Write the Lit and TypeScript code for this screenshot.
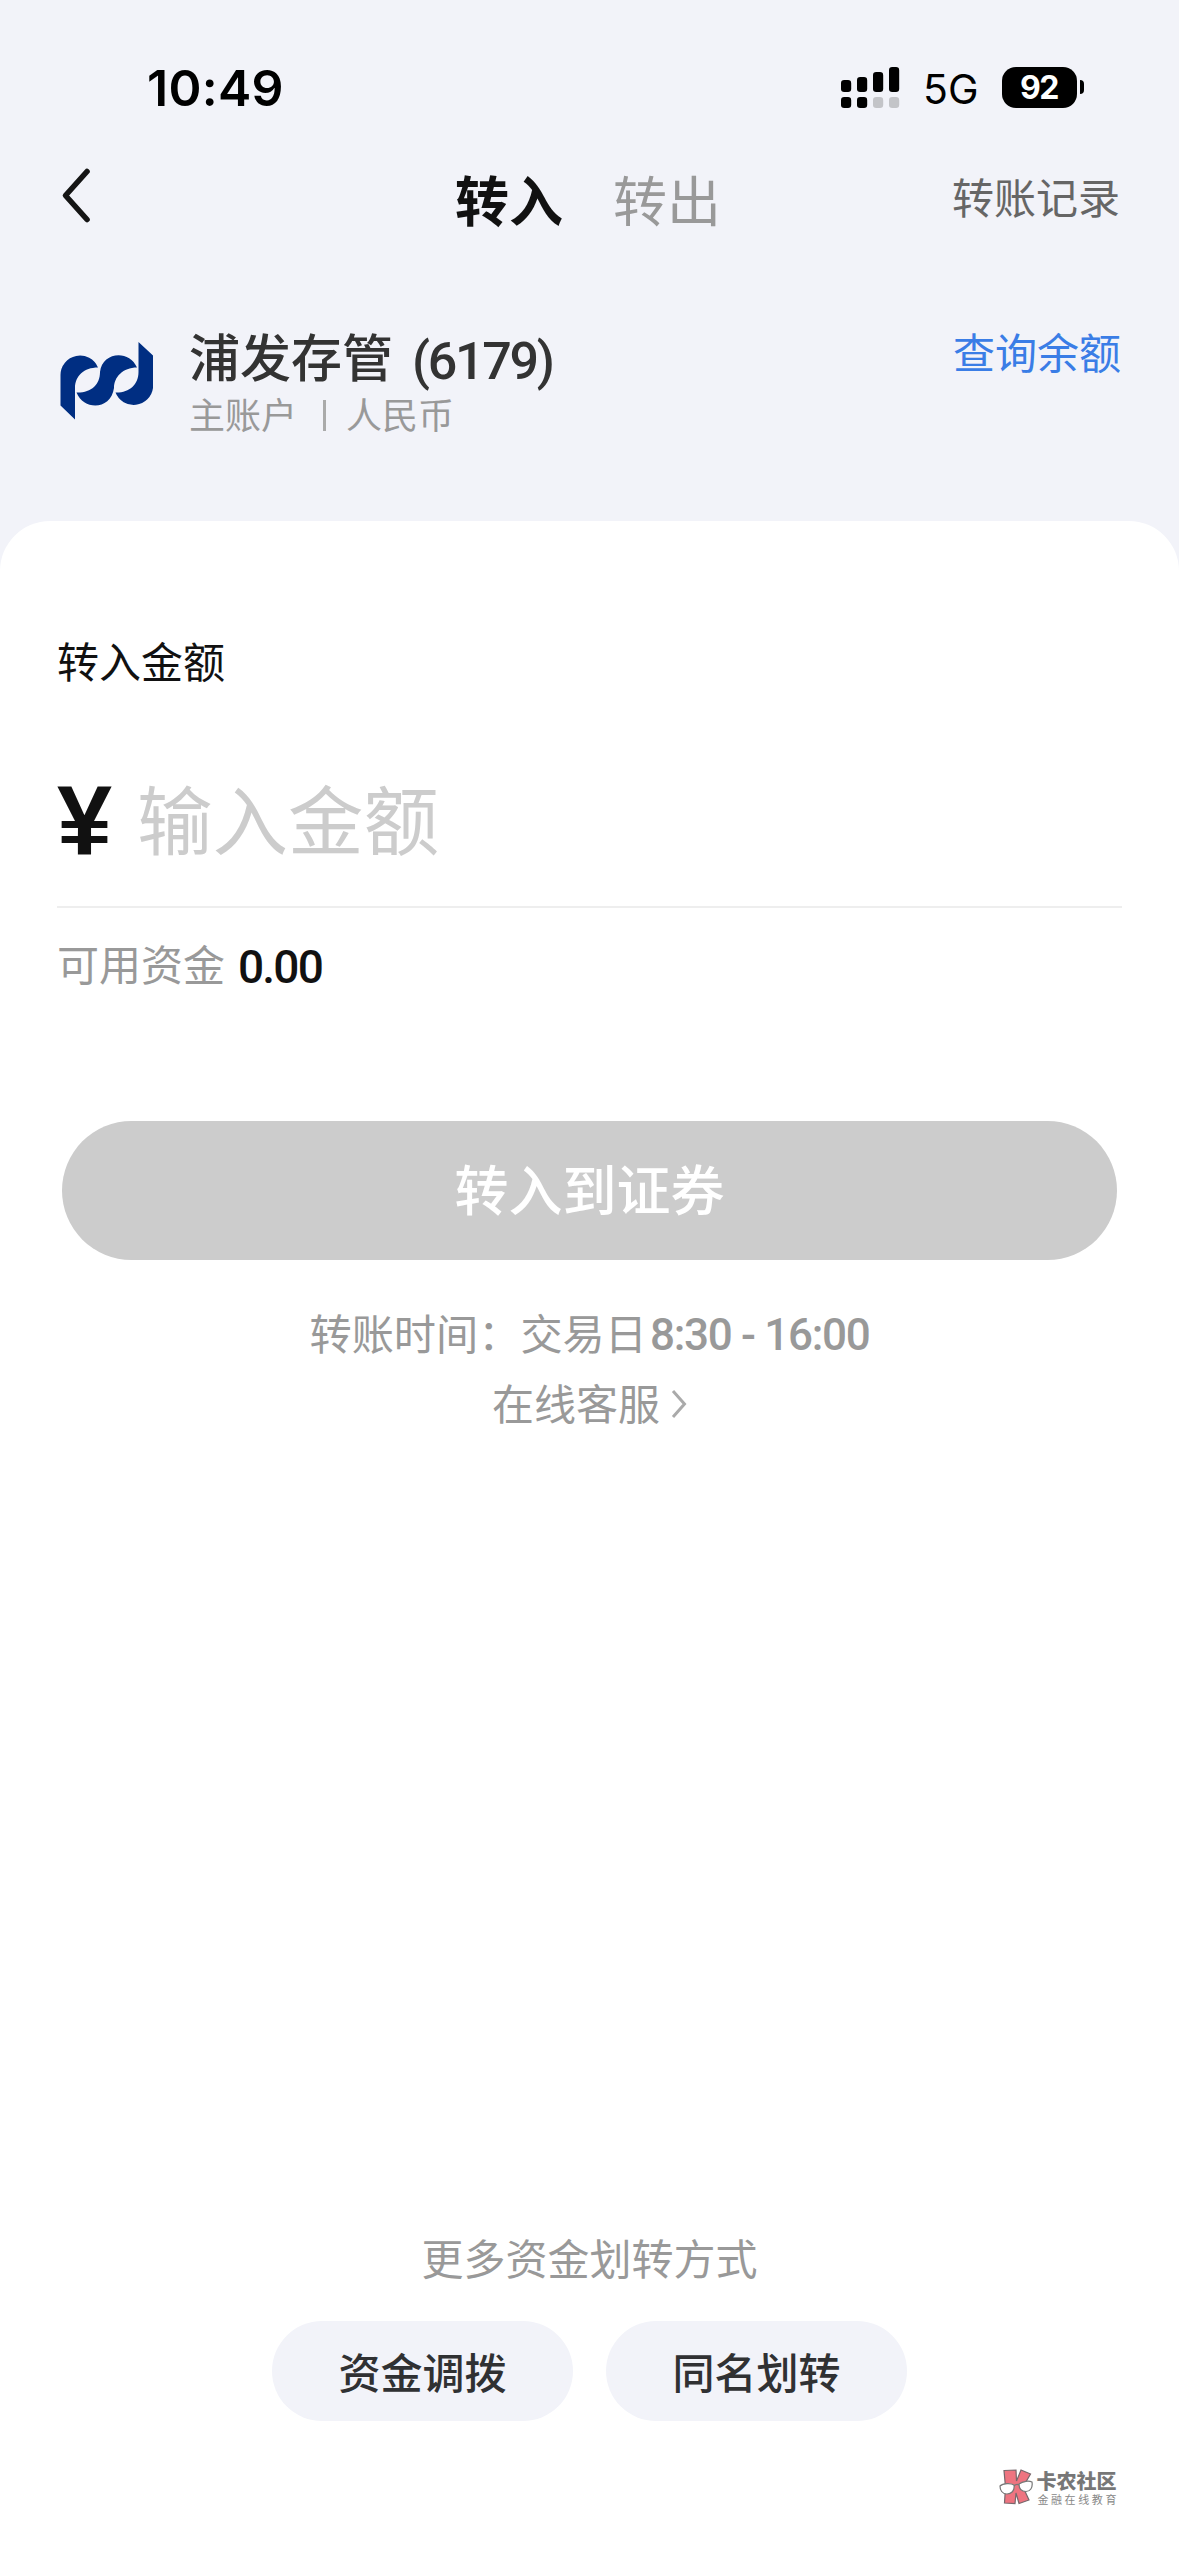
import { LitElement, html, css, svg } from "lit";
import { customElement, property } from "lit/decorators.js";

@customElement("status-bar")
class StatusBar extends LitElement {
  static styles = css`
    :host {
      display: flex;
      height: 134px;
      padding: 40px 95px 0 147px;
      box-sizing: border-box;
      align-items: flex-start;
      font-family: Inter, sans-serif;
      color: #000;
    }
    .time {
      flex: 1;
      font-size: 50px;
      font-weight: 600;
      line-height: 96px;
      letter-spacing: 0.3px;
    }
    .signal {
      margin: 27px 22px 0 0;
      display: block;
    }
    .net {
      font-size: 41px;
      font-weight: 400;
      line-height: 99px;
      width: 79px;
      letter-spacing: 0;
    }
    .battery {
      margin-top: 27px;
      width: 75px;
      height: 41px;
      border-radius: 14px;
      background: #000;
      color: #fff;
      font-size: 32px;
      font-weight: 700;
      line-height: 41px;
      text-align: center;
      letter-spacing: -1.4px;
      padding-right: 1px;
      box-sizing: border-box;
    }
    .nub {
      margin: 40px 0 0 3px;
      width: 4px;
      height: 14px;
      border-radius: 0 6px 6px 0;
      background: #000;
    }
  `;
  render() {
    const bars = [13, 10, 5, 0];
    return html`
      <div class="time">10:49</div>
      <svg class="signal" width="60" height="41" viewBox="0 0 60 41">
        ${bars.map(
          (top, i) => svg`
            <rect x=${i * 16} y=${top} width="10.2" height=${25 - top} rx="3.2" fill="#000"></rect>
            <rect x=${i * 16} y="30" width="10.2" height="11" rx="3.2" fill=${i < 2 ? "#000" : "#c3c4c8"}></rect>`
        )}
      </svg>
      <div class="net">5G</div>
      <div class="battery">92</div>
      <div class="nub"></div>
    `;
  }
}

@customElement("pill-button")
class PillButton extends LitElement {
  @property() label = "";
  static styles = css`
    .pill {
      width: 301px;
      height: 100px;
      border-radius: 50px;
      background: #f2f3f9;
      color: #303133;
      text-align: center;
      font: 500 42px/99px "Noto Sans CJK SC", sans-serif;
    }
  `;
  render() {
    return html`<div class="pill">${this.label}</div>`;
  }
}

@customElement("app-root")
class AppRoot extends LitElement {
  static styles = css`
    :host {
      display: flex;
      flex-direction: column;
      width: 1179px;
      height: 2556px;
      overflow: hidden;
      background: #f2f3f9;
      font-family: "Noto Sans CJK SC", sans-serif;
      color: #111;
    }
    * {
      box-sizing: border-box;
    }
    svg {
      display: block;
    }
    .num {
      font-family: Roboto, sans-serif;
      font-weight: 500;
    }
    .nav {
      display: grid;
      grid-template-columns: 1fr auto 1fr;
      height: 136px;
      padding: 0 59px 0 60px;
      align-items: start;
    }
    .back {
      margin-top: 32px;
    }
    .tabs {
      display: flex;
      gap: 50px;
      font-size: 54px;
      line-height: 80px;
      margin: 25px 4px 0 0;
    }
    .tab {
      color: #999;
    }
    .tab.active {
      color: #111;
      font-weight: 700;
    }
    .record {
      justify-self: end;
      font-size: 42px;
      line-height: 60px;
      margin-top: 32px;
      color: #666;
    }
    .account {
      display: flex;
      height: 251px;
      padding: 0 58px 0 59px;
    }
    .logo {
      margin-top: 72px;
    }
    .info {
      flex: 1;
      padding: 57px 0 0 34px;
      font-family: Roboto, "Noto Sans CJK SC", sans-serif;
    }
    .name {
      display: flex;
      gap: 19px;
      font-size: 51px;
      font-weight: 500;
      line-height: 66px;
      color: #333;
    }
    .name .num {
      letter-spacing: -2.3px;
      font-size: 52px;
      padding-top: 2px;
      height: 66px;
    }
    .meta {
      display: flex;
      align-items: center;
      font-size: 36px;
      line-height: 48px;
      color: #999;
    }
    .sep {
      width: 3px;
      height: 31px;
      margin: 0 20px 3px 26px;
      background: #aaa;
    }
    .query {
      font-size: 42px;
      line-height: 60px;
      margin-top: 51px;
      color: #3a7de6;
    }
    .sheet {
      flex: 1;
      display: flex;
      flex-direction: column;
      background: #fff;
      border-radius: 50px 50px 0 0;
      padding: 0 57px;
    }
    .label {
      margin-top: 109px;
      font-size: 42px;
      line-height: 60px;
    }
    .amount {
      display: flex;
      height: 218px;
      padding-top: 70px;
      border-bottom: 2px solid #eee;
    }
    .yen {
      width: 80px;
      font: 700 99px/120px "Liberation Sans", sans-serif;
    }
    .placeholder {
      font-size: 75.5px;
      line-height: 112px;
      color: #ccc;
    }
    .funds {
      display: flex;
      gap: 13px;
      margin-top: 25px;
      font-size: 42px;
      line-height: 60px;
      color: #999;
    }
    .funds .num {
      color: #111;
      font-size: 46px;
      letter-spacing: -1.8px;
      padding-top: 4px;
      height: 60px;
    }
    .submit {
      margin: 128px 5px 0;
      height: 139px;
      border-radius: 70px;
      background: #ccc;
      color: #fff;
      font-size: 54px;
      font-weight: 500;
      line-height: 134px;
      text-align: center;
    }
    .hours {
      display: flex;
      justify-content: center;
      gap: 3px;
      margin-top: 42px;
      font-size: 42.2px;
      line-height: 60px;
      color: #999;
    }
    .hours .num {
      font-size: 44px;
      letter-spacing: -1.3px;
      padding-top: 3px;
      height: 60px;
    }
    .service {
      display: flex;
      justify-content: center;
      align-items: center;
      gap: 11px;
      margin-top: 10px;
      font-size: 42px;
      line-height: 60px;
      color: #999;
    }
    .service svg {
      margin-top: 4px;
    }
    .more {
      margin-top: 795px;
      font-size: 42px;
      line-height: 60px;
      color: #999;
      text-align: center;
    }
    .pills {
      display: flex;
      justify-content: center;
      gap: 33px;
      margin-top: 34px;
    }
    .mark {
      display: flex;
      align-self: flex-end;
      gap: 3px;
      margin: 48px 3px 0 0;
      color: #777;
    }
    .brand {
      font-size: 20px;
      font-weight: 900;
      line-height: 22px;
      margin-top: 1px;
    }
    .slogan {
      font-size: 11px;
      line-height: 14px;
      letter-spacing: 2.6px;
      padding-left: 1px;
      color: #888;
    }
  `;

  render() {
    return html`
      <status-bar></status-bar>
      <div class="nav">
        <svg class="back" width="34" height="60" viewBox="0 0 34 60" fill="none" stroke="#151515" stroke-width="5.6" stroke-linecap="round" stroke-linejoin="round">
          <path d="M27 5.500 L5.500 29.500 L27 53.500"></path>
        </svg>
        <div class="tabs">
          <div class="tab active">转入</div>
          <div class="tab">转出</div>
        </div>
        <div class="record">转账记录</div>
      </div>
      <div class="account">
        <svg class="logo" width="96" height="80" viewBox="0 0 96 80">
          <g fill="#002e82">
            <path d="M1.500 63.500 V33 A19.500 19.500 0 0 1 39 25.500 C25 25.500 16 34 16 46 V77.500 Z"></path>
            <path d="M17.500 50.500 C32 51 41 43 41 30 C43 10 70 7 78 25.500 C64 25.500 55 35 55 46 C52 68 25 69 17.500 50.500 Z"></path>
            <path d="M79.500 0 L94 13.500 V46 A19.500 19.500 0 0 1 56.500 50.500 C70 51 79.500 43 79.500 30 Z"></path>
          </g>
        </svg>
        <div class="info">
          <div class="name"><span>浦发存管</span><span class="num">(6179)</span></div>
          <div class="meta"><span>主账户</span><i class="sep"></i><span>人民币</span></div>
        </div>
        <div class="query">查询余额</div>
      </div>
      <div class="sheet">
        <div class="label">转入金额</div>
        <div class="amount">
          <div class="yen">¥</div>
          <div class="placeholder">输入金额</div>
        </div>
        <div class="funds"><span>可用资金</span><span class="num">0.00</span></div>
        <div class="submit">转入到证券</div>
        <div class="hours"><span>转账时间：交易日</span><span class="num">8:30 - 16:00</span></div>
        <div class="service">
          <span>在线客服</span>
          <svg width="16" height="30" viewBox="0 0 16 30" fill="none" stroke="#aaa" stroke-width="3">
            <path d="M2 2 L13.500 15 L2 28"></path>
          </svg>
        </div>
        <div class="more">更多资金划转方式</div>
        <div class="pills">
          <pill-button label="资金调拨"></pill-button>
          <pill-button label="同名划转"></pill-button>
        </div>
        <div class="mark">
          <svg width="34" height="36" viewBox="0 0 34 36">
            <path d="M5 1.500 L17 1 L17.500 12 L22 1 L31.500 5 L24 18 L30 31 L20 34.500 L17 24 L16 34.500 L5.500 34 L6.500 18 Z" fill="#ee7480" stroke="#77676b" stroke-width="1.200"></path>
            <path d="M1 17 C4 14 12 14 15 16 C16 22 12 25 8 25 C3 25 1 21 1 17 Z M20 15 C24 12 30 11.500 33 13 C34 19 31 22.500 27 22.500 C22 22.500 20 19 20 15 Z" fill="#fff" stroke="#777" stroke-width="1.200"></path>
            <path d="M15 17 Q17.500 14.500 20 16" fill="none" stroke="#777" stroke-width="1.200"></path>
          </svg>
          <div>
            <div class="brand">卡农社区</div>
            <div class="slogan">金融在线教育</div>
          </div>
        </div>
      </div>
    `;
  }
}
